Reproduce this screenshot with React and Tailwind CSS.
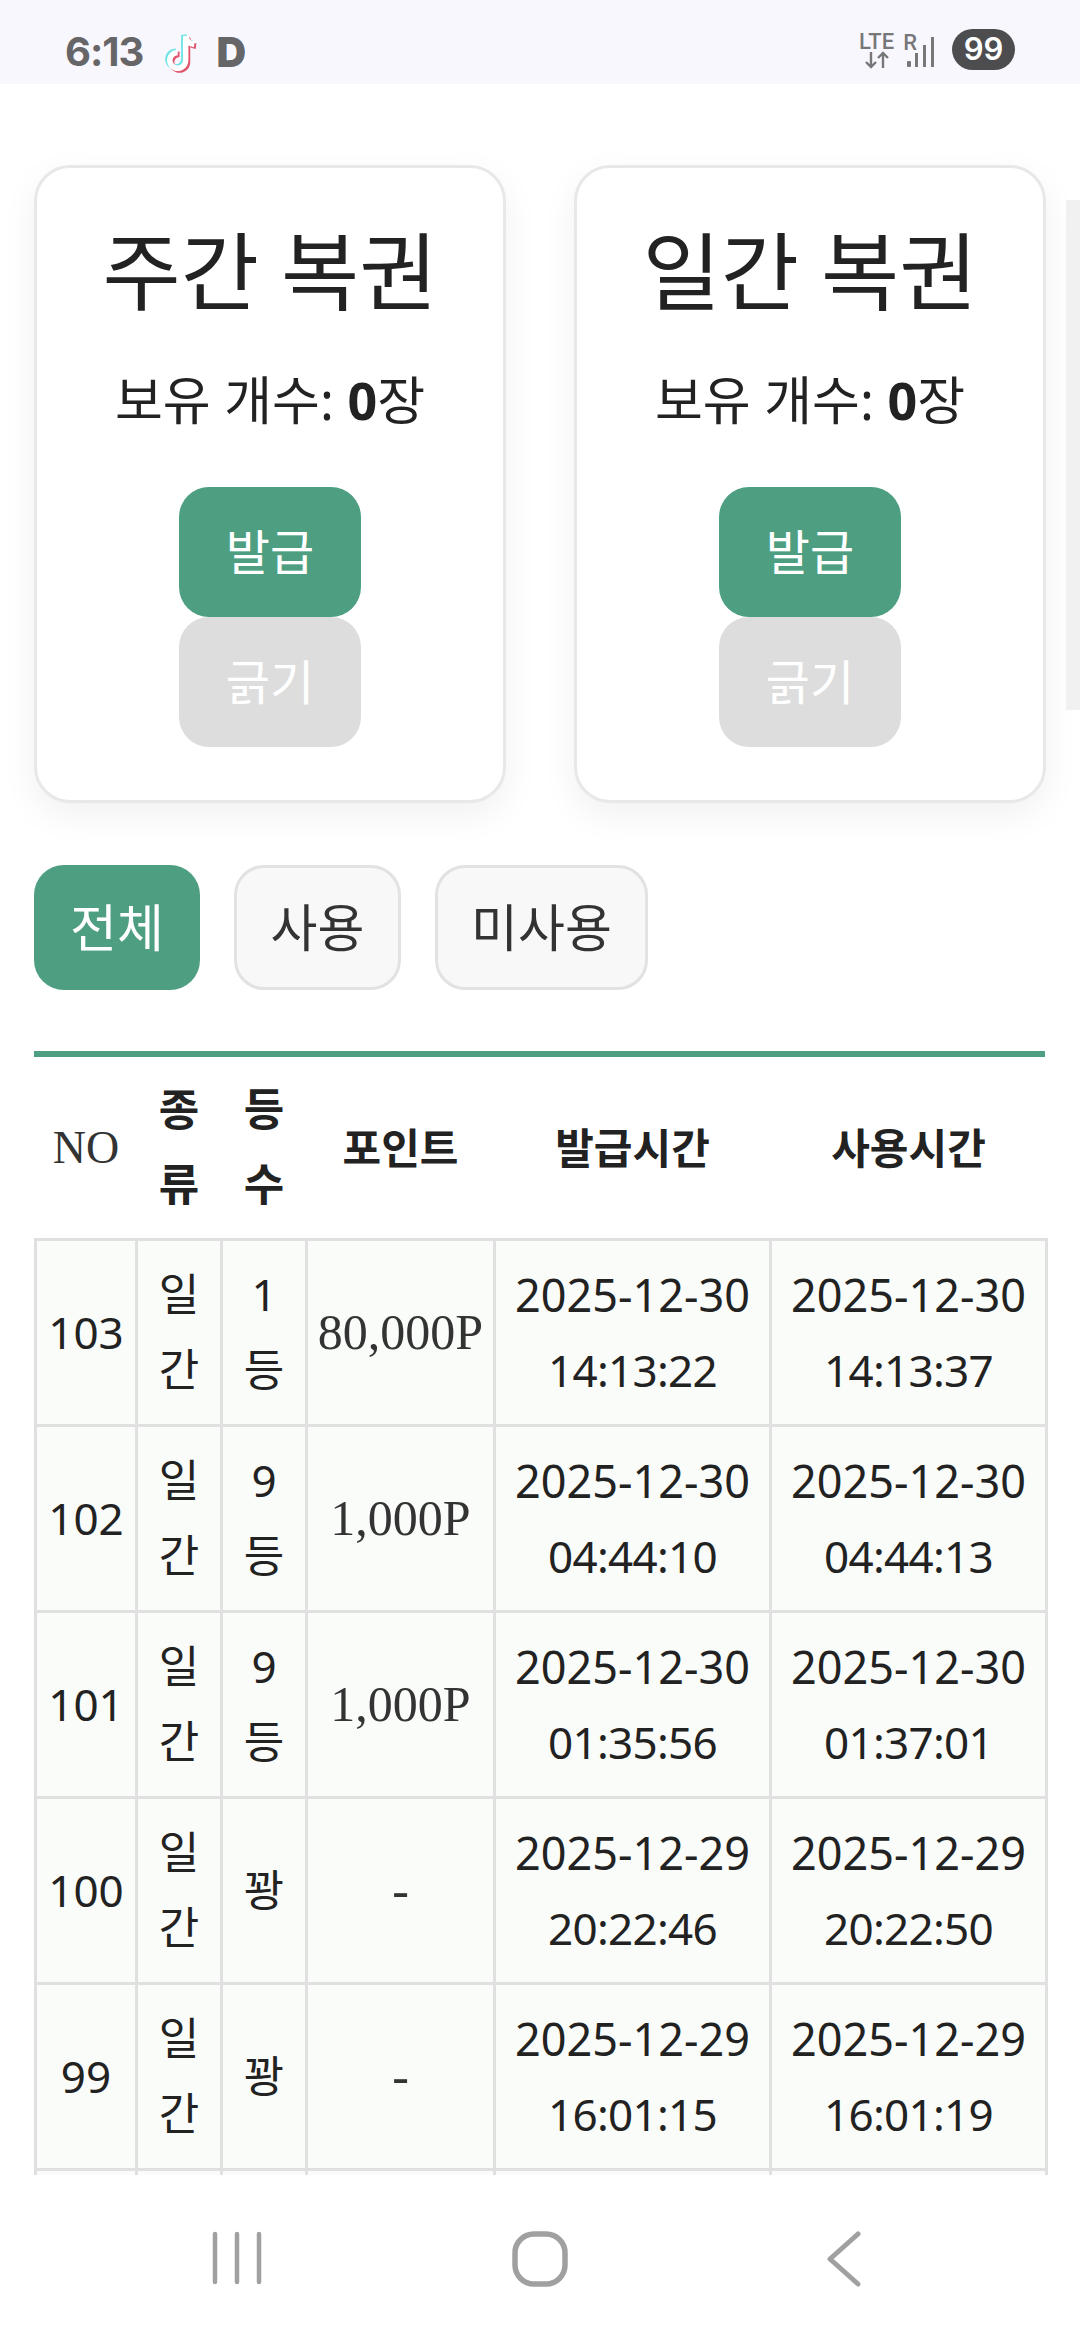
const rows = [
  { no: "103", type: "일간", rank: "1등", point: "80,000P", issued: ["2025-12-30", "14:13:22"], used: ["2025-12-30", "14:13:37"] },
  { no: "102", type: "일간", rank: "9등", point: "1,000P", issued: ["2025-12-30", "04:44:10"], used: ["2025-12-30", "04:44:13"] },
  { no: "101", type: "일간", rank: "9등", point: "1,000P", issued: ["2025-12-30", "01:35:56"], used: ["2025-12-30", "01:37:01"] },
  { no: "100", type: "일간", rank: "꽝", point: "-", issued: ["2025-12-29", "20:22:46"], used: ["2025-12-29", "20:22:50"] },
  { no: "99", type: "일간", rank: "꽝", point: "-", issued: ["2025-12-29", "16:01:15"], used: ["2025-12-29", "16:01:19"] },
];

const NOTE = "M19 4v20a6.5 6.5 0 1 1-6.5-6.5M19 4c.5 4 3 6.5 7 7";

const StatusBar = () => (
  <div className="flex h-[84px] shrink-0 items-start justify-between bg-[#f9f7fe] pl-[65px] pr-[65px] pt-[29px]">
    <div className="flex items-center">
      <span className="font-['Inter'] text-[40px] font-bold leading-[42px] tracking-[-1px] text-[#666668]">6:13</span>
      <svg className="ml-[19px] mt-[2px] h-[44px] w-[40px]" viewBox="0 0 32 36" fill="none" strokeWidth="4.5">
        <path d={NOTE} stroke="#6fe3e6" transform="translate(-1.5 -1)" />
        <path d={NOTE} stroke="#e0566c" transform="translate(1.5 1.5)" />
        <path d={NOTE} stroke="#ffffff" />
      </svg>
      <span className="ml-[14px] font-['Inter'] text-[41px] font-black leading-[42px] text-[#666668]">D</span>
    </div>
    <div className="flex items-center">
      <div className="flex flex-col items-center font-['Roboto'] text-[#77777a]">
        <span className="text-[22px] font-medium leading-[21px]">LTE</span>
        <svg className="mt-[-1px] h-[18px] w-[26px]" viewBox="0 0 26 18" fill="none" stroke="#77777a" strokeWidth="2.4">
          <path d="M7 1v15M2 11l5 5 5-5M19 17V2M14 7l5-5 5 5" />
        </svg>
      </div>
      <span className="mb-[14px] ml-[9px] font-['Roboto'] text-[22px] font-medium leading-[21px] text-[#77777a]">R</span>
      <svg className="ml-[-12px] mt-[6px] h-[32px] w-[30px]" viewBox="0 0 30 32" fill="#77777a">
        <rect x="2" y="24" width="4" height="6" rx="1" />
        <rect x="10" y="16" width="3" height="14" />
        <rect x="18" y="8" width="3" height="22" />
        <rect x="26" y="0" width="3" height="30" />
      </svg>
      <div className="ml-[17px] flex h-[41px] w-[63px] items-center justify-center rounded-full bg-[#4d4d4f] font-['Inter'] text-[31px] font-semibold text-white">99</div>
    </div>
  </div>
);

const TicketCard = ({ title }) => (
  <div className="flex h-[638px] w-[472px] flex-col items-center rounded-[36px] border-[3px] border-[#e8e8e8] bg-white shadow-[0_12px_36px_rgba(0,0,0,0.06)]">
    <h2 className="mt-[45px] text-[85px] font-normal leading-[116px] text-[#222]">{title}</h2>
    <p className="mt-[37px] text-[52px] leading-[68px] text-[#222]">
      보유 개수: <b className="font-bold">0</b>장
    </p>
    <button className="mt-[53px] h-[130px] w-[182px] rounded-[30px] bg-[#4e9f82] text-[48px] text-white">발급</button>
    <button className="h-[130px] w-[182px] rounded-[30px] bg-[#dddddd] text-[48px] text-white">긁기</button>
  </div>
);

const FilterButton = ({ active, className, children }) => (
  <button
    className={
      active
        ? `h-[125px] rounded-[30px] bg-[#4e9f82] text-[51px] text-white ${className}`
        : `h-[125px] rounded-[30px] border-[3px] border-[#e2e2e2] bg-[#f8f8f8] text-[51px] text-[#333] ${className}`
    }
  >
    {children}
  </button>
);

const Cell = ({ wide, children }) => (
  <td className={wide ? "border-[3px] border-[#e0e0e0] text-center" : "border-[3px] border-[#e0e0e0] px-[18px] text-center"}>
    {children}
  </td>
);

const PointCell = ({ children }) => (
  <td className="border-[3px] border-[#e0e0e0] text-center font-['Liberation_Serif'] text-[50px] text-[#333]">{children}</td>
);

const DateCell = ({ value }) => (
  <td className="border-[3px] border-[#e0e0e0] text-center text-[45px]">
    {value[0]}
    <br />
    <span className="text-[44px] tracking-[-0.7px]">{value[1]}</span>
  </td>
);

const NavBar = () => (
  <div className="flex h-[165px] shrink-0 items-start bg-white pt-[56px]">
    <svg className="ml-[212px] h-[54px] w-[50px]" viewBox="0 0 50 54" fill="none" stroke="#a0a0a0" strokeWidth="4.5" strokeLinecap="round">
      <path d="M3 3v48M25 3v48M47 3v48" />
    </svg>
    <svg className="ml-[250px] h-[56px] w-[56px]" viewBox="0 0 56 56" fill="none" stroke="#a0a0a0" strokeWidth="5.5">
      <rect x="3" y="3" width="50" height="50" rx="19" />
    </svg>
    <svg className="ml-[258px] h-[56px] w-[36px]" viewBox="0 0 36 56" fill="none" stroke="#a0a0a0" strokeWidth="5" strokeLinecap="round" strokeLinejoin="round">
      <path d="M32 3 4 28l28 25" />
    </svg>
  </div>
);

export default function App() {
  return (
    <div className="relative flex h-[2340px] w-[1080px] flex-col overflow-hidden bg-white font-['Noto_Sans','Noto_Sans_CJK_KR',sans-serif] text-[#222]">
      <StatusBar />

      <div className="min-h-0 flex-1 overflow-hidden px-[34px] pt-[81px]">
        <div className="flex gap-[68px]">
          <TicketCard title="주간 복권" />
          <TicketCard title="일간 복권" />
        </div>

        <div className="mt-[62px] flex gap-[34px]">
          <FilterButton active className="w-[166px]">전체</FilterButton>
          <FilterButton className="w-[167px]">사용</FilterButton>
          <FilterButton className="w-[213px]">미사용</FilterButton>
        </div>

        <div className="mt-[61px] w-[1011px] border-t-[6px] border-[#4e9f82]">
          <table className="w-full table-fixed border-collapse text-[44px] leading-[75px]">
            <colgroup>
              <col className="w-[101px]" />
              <col className="w-[85px]" />
              <col className="w-[85px]" />
              <col className="w-[188px]" />
              <col className="w-[276px]" />
              <col className="w-[276px]" />
            </colgroup>
            <thead>
              <tr className="h-[182px]">
                <th className="text-center font-['Liberation_Serif'] text-[46px] font-normal text-[#333]">NO</th>
                <th className="px-[18px] text-center font-bold">종류</th>
                <th className="px-[18px] text-center font-bold">등수</th>
                <th className="text-center text-[42px] font-bold">포인트</th>
                <th className="text-center text-[42px] font-bold">발급시간</th>
                <th className="text-center text-[42px] font-bold">사용시간</th>
              </tr>
            </thead>
            <tbody className="bg-[#fafcf9]">
              {rows.map((r) => (
                <tr key={r.no} className="h-[186px]">
                  <Cell wide>{r.no}</Cell>
                  <Cell>{r.type}</Cell>
                  <Cell>{r.rank}</Cell>
                  <PointCell>{r.point}</PointCell>
                  <DateCell value={r.issued} />
                  <DateCell value={r.used} />
                </tr>
              ))}
              <tr className="h-[186px]">
                <td className="border-[3px] border-[#e0e0e0]" />
                <td className="border-[3px] border-[#e0e0e0]" />
                <td className="border-[3px] border-[#e0e0e0]" />
                <td className="border-[3px] border-[#e0e0e0]" />
                <td className="border-[3px] border-[#e0e0e0]" />
                <td className="border-[3px] border-[#e0e0e0]" />
              </tr>
            </tbody>
          </table>
        </div>
      </div>

      <NavBar />

      {/* page scrollbar */}
      <div className="absolute right-0 top-[200px] h-[510px] w-[14px] bg-[#f1f1f1]" />
    </div>
  );
}
